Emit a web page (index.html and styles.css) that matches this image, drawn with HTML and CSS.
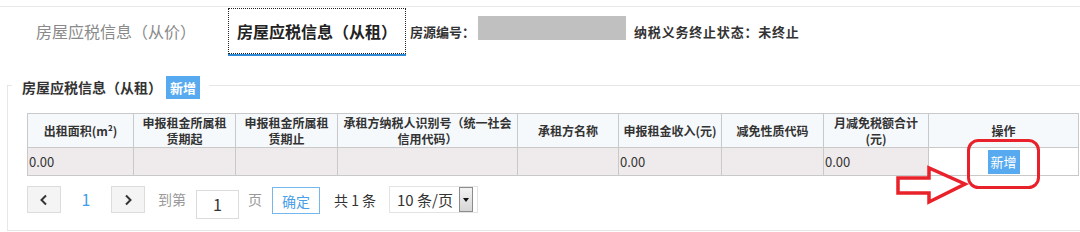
FILE: index.html
```html
<!DOCTYPE html>
<html lang="zh-CN">
<head>
<meta charset="utf-8">
<title>房屋应税信息</title>
<link rel="stylesheet" href="styles.css">
</head>
<body>
<div class="page">
  <div class="tabbar">
    <div class="tab">房屋应税信息（从价）</div>
    <div class="tab active"><span class="tab-focus">房屋应税信息（从租）</span></div>
    <div class="info">
      <span class="label">房源编号：</span>
      <span class="idbox"></span>
      <span class="label status">纳税义务终止状态：未终止</span>
    </div>
  </div>

  <fieldset class="panel">
    <legend class="legend"><span class="legend-title">房屋应税信息（从租）</span><button class="btn-blue btn-legend">新增</button></legend>
    <div class="panel-body">
      <table class="grid">
        <colgroup>
          <col class="c1"><col class="c2"><col class="c3"><col class="c4"><col class="c5"><col class="c6"><col class="c7"><col class="c8"><col class="c9">
        </colgroup>
        <thead>
          <tr>
            <th>出租面积(m²)</th>
            <th>申报租金所属租<br>赁期起</th>
            <th>申报租金所属租<br>赁期止</th>
            <th>承租方纳税人识别号（统一社会<br>信用代码）</th>
            <th>承租方名称</th>
            <th>申报租金收入(元)</th>
            <th>减免性质代码</th>
            <th>月减免税额合计<br>(元)</th>
            <th>操作</th>
          </tr>
        </thead>
        <tbody>
          <tr>
            <td>0.00</td>
            <td></td>
            <td></td>
            <td></td>
            <td></td>
            <td>0.00</td>
            <td></td>
            <td>0.00</td>
            <td class="op"><button class="btn-blue btn-row">新增</button></td>
          </tr>
        </tbody>
      </table>

      <div class="pager">
        <button class="pg-btn" aria-label="上一页"><svg width="10" height="12" viewBox="0 0 10 12"><polyline points="7,1.5 2.5,6 7,10.5" fill="none" stroke="#333" stroke-width="2"/></svg></button>
        <span class="pg-num">1</span>
        <button class="pg-btn" aria-label="下一页"><svg width="10" height="12" viewBox="0 0 10 12"><polyline points="3,1.5 7.5,6 3,10.5" fill="none" stroke="#333" stroke-width="2"/></svg></button>
        <span class="pg-text goto">到第</span>
        <span class="pg-input">1</span>
        <span class="pg-text page-unit">页</span>
        <button class="pg-ok">确定</button>
        <span class="pg-total">共 1 条</span>
        <span class="pg-select"><span class="pg-select-text">10 条/页</span><span class="pg-arrow"></span></span>
      </div>
    </div>
  </fieldset>

  <svg class="annot" width="156" height="76" viewBox="0 0 156 76">
    <rect x="78.5" y="5.5" width="70" height="47" rx="10" ry="10" fill="none" stroke="#e8212a" stroke-width="3"/>
    <polygon points="8,43 39,43 39,33 75,49 39,67 39,58 8,58" fill="none" stroke="#e8212a" stroke-width="3.5" stroke-linejoin="miter"/>
  </svg>
</div>
</body>
</html>
```

FILE: styles.css
```css
* { box-sizing: border-box; }

body {
  margin: 0;
  background: #fff;
  color: #333;
  font-family: "Noto Sans CJK SC", "Noto Sans", sans-serif;
}

.page {
  position: relative;
  width: 1080px;
  height: 232px;
  overflow: hidden;
}

/* ---------- tab bar ---------- */
.tabbar {
  margin-top: 6px;
  border-top: 1px solid #e8e8e8;
  padding-top: 1px;
  display: flex;
  align-items: flex-start;
}

.tab {
  margin-left: 20px;
  padding: 0 16px;
  font-size: 16px;
  line-height: 46px;
  color: #8a8a8a;
  white-space: nowrap;
}

.tab.active {
  margin-left: 16px;
  padding: 0;
  color: #222;
  font-weight: bold;
  border-bottom: 2px solid #2f8ad6;
  background: #fff;
}

.tab-focus {
  display: block;
  border: 1px dotted #222;
  line-height: 44px;
  padding: 0 8px;
}

.info {
  display: flex;
  align-items: flex-start;
  margin-left: 4px;
  padding-top: 8px;
}

.label {
  margin-top: 4px;
  font-size: 13px;
  font-weight: bold;
  line-height: 24px;
  color: #333;
  white-space: nowrap;
}

.idbox {
  width: 148px;
  height: 24px;
  margin-left: 3px;
  background: #c0c0c0;
}

.status {
  margin-left: 8px;
  letter-spacing: 0.8px;
}

/* ---------- panel ---------- */
.panel {
  margin: 15px 0 0 7px;
  padding: 0 0 0 4px;
  border: 1px solid #e6e6e6;
  border-right: 0;
  min-width: 0;
}

.legend {
  display: flex;
  align-items: center;
  padding: 5px 9px 0 10px;
}

.legend-title {
  font-size: 14px;
  font-weight: bold;
  color: #333;
  line-height: 23px;
}

.btn-blue {
  border: 0;
  margin: 0;
  padding: 0;
  background: #57aaef;
  color: #fff;
  font-family: inherit;
  font-size: 13px;
  cursor: pointer;
}

.btn-legend {
  width: 34px;
  height: 23px;
  margin-left: 4px;
  font-weight: bold;
}

.panel-body {
  padding: 14px 0 11px 15px;
}

/* ---------- table ---------- */
.grid {
  border-collapse: collapse;
  table-layout: fixed;
  width: 1051px;
}

.c1 { width: 106px; }
.c2 { width: 102px; }
.c3 { width: 102px; }
.c4 { width: 180px; }
.c5 { width: 101px; }
.c6 { width: 103px; }
.c7 { width: 102px; }
.c8 { width: 105px; }
.c9 { width: 150px; }

.grid th,
.grid td {
  border: 1px solid #c9c9c9;
}

.grid th {
  height: 34px;
  padding: 0 2px;
  background: #f6f9fc;
  font-size: 12px;
  font-weight: bold;
  line-height: 16px;
  color: #333;
  text-align: center;
  vertical-align: middle;
  white-space: nowrap;
}

.grid td {
  height: 28px;
  padding: 0 1px;
  background: #efebec;
  font-size: 13px;
  color: #333;
  vertical-align: middle;
}

.grid td.op {
  background: #fff;
  text-align: center;
}

.btn-row {
  width: 32px;
  height: 24px;
  display: block;
  margin: 0 auto;
}

/* ---------- pager ---------- */
.pager {
  margin-top: 10px;
  display: flex;
  align-items: flex-start;
}

.pg-btn {
  width: 34px;
  height: 27px;
  margin: 0;
  padding: 0;
  border: 1px solid #dcdcdc;
  background: #f4f4f4;
  display: flex;
  align-items: center;
  justify-content: center;
}

.pg-num {
  width: 50px;
  text-align: center;
  font-size: 16px;
  line-height: 27px;
  color: #3f9ce8;
}

.pg-text {
  font-size: 14px;
  line-height: 27px;
  color: #9a9a9a;
}

.goto { margin-left: 13px; }

.pg-input {
  width: 43px;
  height: 29px;
  margin: 4px 0 0 10px;
  border: 1px solid #dcdcdc;
  text-align: center;
  font-size: 16px;
  line-height: 27px;
  color: #333;
}

.page-unit { margin-left: 9px; }

.pg-ok {
  width: 48px;
  height: 27px;
  margin: 1px 0 0 10px;
  padding: 0;
  border: 1px solid #74b7ef;
  background: #fff;
  color: #4aa0e8;
  font-family: inherit;
  font-size: 14px;
}

.pg-total {
  margin-left: 14px;
  font-size: 14px;
  line-height: 29px;
  color: #333;
  white-space: nowrap;
}

.pg-select {
  width: 89px;
  height: 27px;
  margin-left: 13px;
  border: 1px solid #e3e3e3;
  display: flex;
  align-items: center;
  padding-left: 7px;
}

.pg-select-text {
  font-size: 15px;
  color: #333;
  white-space: nowrap;
}

.pg-arrow {
  width: 14px;
  height: 25px;
  margin-left: 6px;
  border: 1px solid #8c8c8c;
  background: linear-gradient(#f2f2f2, #d6d6d6);
  display: flex;
  align-items: center;
  justify-content: center;
}

.pg-arrow::after {
  content: "";
  border-left: 3.5px solid transparent;
  border-right: 3.5px solid transparent;
  border-top: 4px solid #111;
}

/* ---------- annotation overlay ---------- */
.annot {
  position: absolute;
  left: 890px;
  top: 135px;
}
```
